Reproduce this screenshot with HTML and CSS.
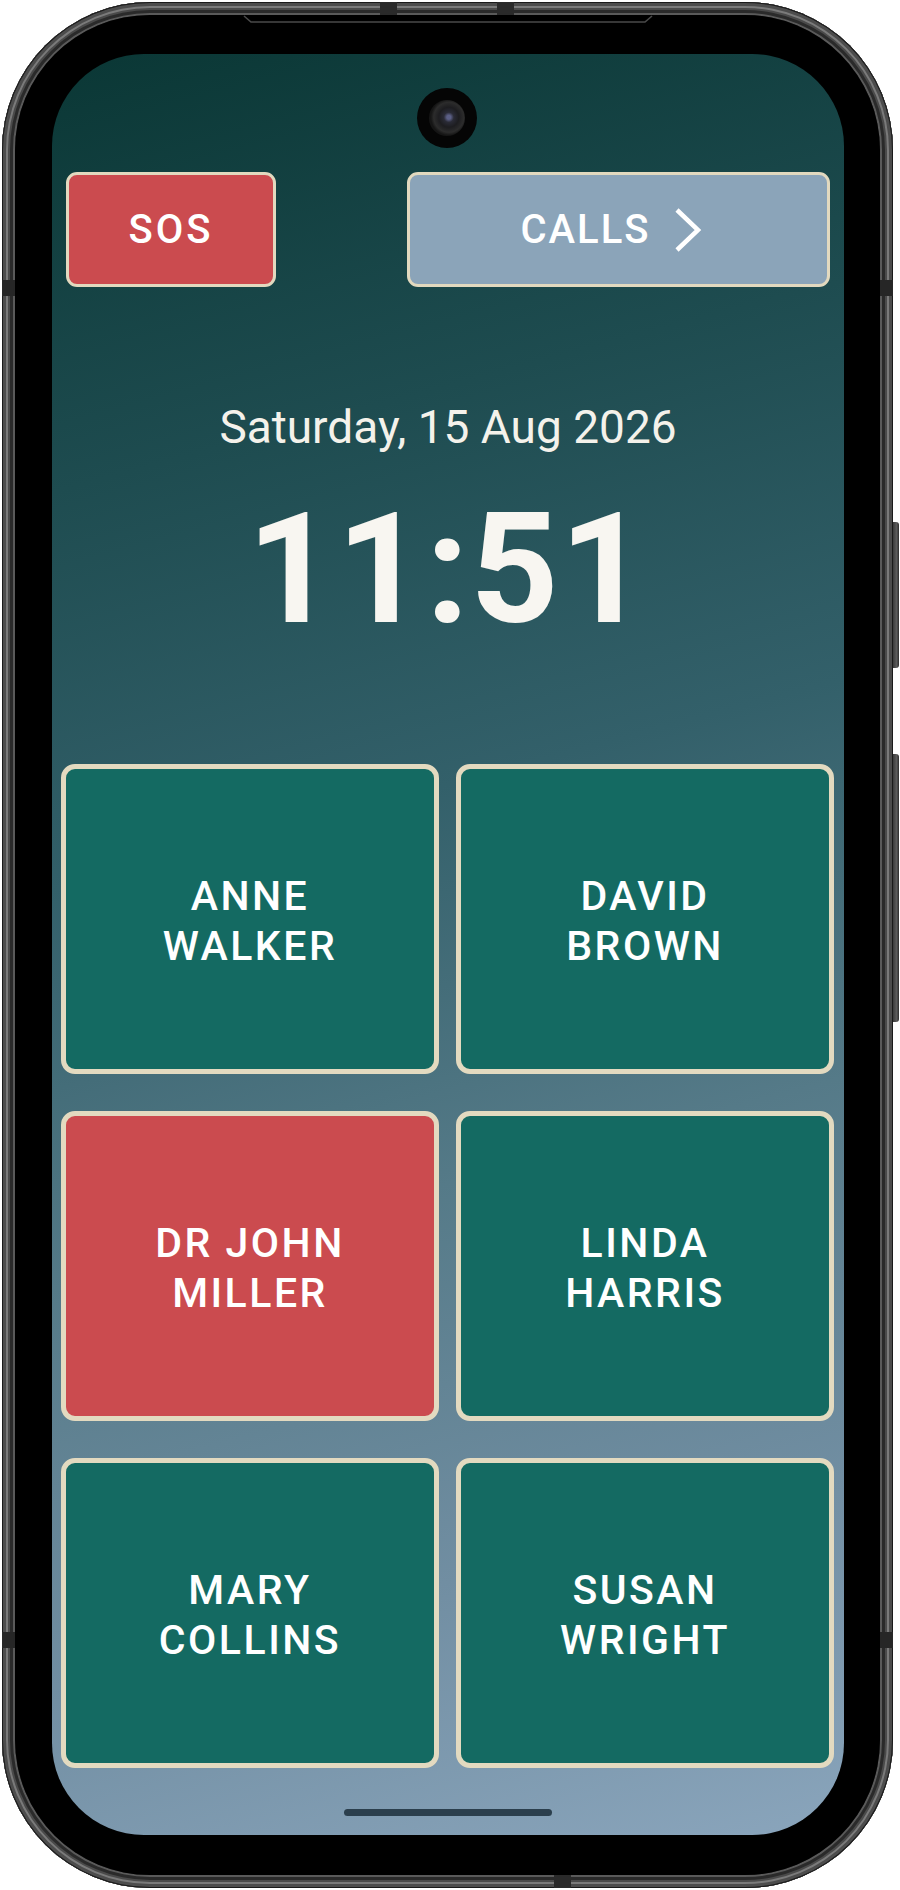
FILE: index.html
```html
<!DOCTYPE html>
<html lang="en">
<head>
<meta charset="utf-8">
<title>Home</title>
<link rel="stylesheet" href="styles.css">
</head>
<body>
<div class="phone">
  <span class="band band-top1"></span>
  <span class="band band-top2"></span>
  <span class="band band-bot"></span>
  <span class="band-side band-left1"></span>
  <span class="band-side band-left2"></span>
  <span class="band-side band-right1"></span>
  <span class="band-side band-right2"></span>
  <span class="side-btn side-btn-1"></span>
  <span class="side-btn side-btn-2"></span>
  <div class="bezel">
    <svg class="earpiece" width="410" height="10" viewBox="0 0 410 10">
      <path d="M1 1 L8 7 L402 7 L409 1" fill="none" stroke="#4a4a4a" stroke-width="1.6"/>
    </svg>
    <div class="screen">
      <div class="camera"><div class="lens"></div></div>
      <div class="top-row">
        <div class="btn btn-sos">SOS</div>
        <div class="btn btn-calls">
          <span>CALLS</span>
          <svg class="chevron" width="30" height="46" viewBox="0 0 30 46">
            <path d="M4 3 L25 23 L4 43" fill="none" stroke="#ffffff" stroke-width="4.5"/>
          </svg>
        </div>
      </div>
      <div class="date">Saturday, 15 Aug 2026</div>
      <div class="time">11:51</div>
      <div class="grid">
        <div class="tile">ANNE<br>WALKER</div>
        <div class="tile">DAVID<br>BROWN</div>
        <div class="tile tile-red">DR JOHN<br>MILLER</div>
        <div class="tile">LINDA<br>HARRIS</div>
        <div class="tile">MARY<br>COLLINS</div>
        <div class="tile">SUSAN<br>WRIGHT</div>
      </div>
      <div class="home-bar"></div>
    </div>
  </div>
</div>
</body>
</html>
```

FILE: styles.css
```css
html, body {
  margin: 0;
  padding: 0;
  background: #ffffff;
}

body {
  width: 900px;
  height: 1890px;
  overflow: hidden;
  font-family: Roboto, "Liberation Sans", sans-serif;
}

.phone {
  position: relative;
  box-sizing: border-box;
  margin: 2px 0 0 2px;
  width: 891px;
  height: 1886px;
  padding: 13px;
  border-radius: 148px;
  background: linear-gradient(90deg, #2e2e2e, #3d3d3d 50%, #2e2e2e);
  box-shadow:
    inset 0 0 0 1px #1a1a1a,
    inset 0 0 0 4px #4c4c4c,
    inset 0 0 0 6px #7a7a7a,
    inset 0 0 0 8px #4a4a4a,
    inset 0 0 0 11px #2a2a2a,
    inset 0 0 0 13px #5a5a5a;
}

.band {
  position: absolute;
  top: 0;
  width: 17px;
  height: 13px;
  background: #2a2a2a;
}
.band-top1 { left: 378px; }
.band-top2 { left: 495px; }
.band-bot { top: auto; bottom: 0; left: 552px; }

.band-side {
  position: absolute;
  width: 13px;
  height: 16px;
  background: #262626;
}
.band-left1 { left: 0; top: 278px; }
.band-left2 { left: 0; top: 1630px; }
.band-right1 { right: 0; top: 278px; }
.band-right2 { right: 0; top: 1630px; }

.side-btn {
  position: absolute;
  right: -6px;
  width: 6px;
  border-radius: 0 3px 3px 0;
  background: linear-gradient(90deg, #3a3a3a, #5c5c5c 60%, #2c2c2c);
}
.side-btn-1 { top: 520px; height: 146px; }
.side-btn-2 { top: 752px; height: 268px; }

.bezel {
  position: relative;
  box-sizing: border-box;
  height: 100%;
  padding: 39px 36px 40px 37px;
  border-radius: 135px;
  background: #000000;
}

.earpiece {
  position: absolute;
  left: 228px;
  top: 0;
}

.screen {
  position: relative;
  box-sizing: border-box;
  width: 792px;
  height: 1781px;
  border-radius: 92px;
  overflow: hidden;
  display: flex;
  flex-direction: column;
  background: linear-gradient(165deg, #0a3735 0%, #1e4c50 22%, #33606a 42%, #557a88 62%, #718ea2 82%, #8aa5bc 100%);
}

.camera {
  position: absolute;
  left: 365px;
  top: 34px;
  width: 60px;
  height: 60px;
  border-radius: 50%;
  background: #050505;
  display: flex;
  align-items: center;
  justify-content: center;
}
.lens {
  width: 36px;
  height: 36px;
  border-radius: 50%;
  background: radial-gradient(circle at 55% 48%, #5b5f86 0 2px, #2a2b36 5px, #1d1d20 10px, #2c2c2c 15px, #151515 18px);
}

.top-row {
  margin-top: 118px;
  padding: 0 14px;
  height: 115px;
  display: flex;
  justify-content: space-between;
}

.btn {
  box-sizing: border-box;
  height: 115px;
  border: 3px solid #e2d9bf;
  border-radius: 11px;
  display: flex;
  align-items: center;
  justify-content: center;
  color: #ffffff;
  font-size: 40px;
  font-weight: 500;
  letter-spacing: 2px;
}

.btn-sos {
  width: 210px;
  background: #cb4b4f;
  letter-spacing: 3px;
}

.btn-calls {
  width: 423px;
  padding-right: 14px;
  background: #8ba4b9;
  gap: 22px;
}

.chevron {
  display: block;
}

.date {
  margin-top: 113px;
  text-align: center;
  color: #f4f2eb;
  font-size: 46px;
  line-height: 54px;
  font-weight: 400;
}

.time {
  margin-top: 39px;
  text-align: center;
  color: #f8f6f1;
  font-size: 154px;
  line-height: 154px;
  font-weight: 700;
  letter-spacing: 1px;
}

.grid {
  margin-top: 117px;
  padding: 0 10px 0 9px;
  display: grid;
  grid-template-columns: 378px 378px;
  grid-auto-rows: 310px;
  column-gap: 17px;
  row-gap: 37px;
}

.tile {
  box-sizing: border-box;
  border: 5px solid #e3dac0;
  border-radius: 14px;
  background: #146a62;
  display: flex;
  align-items: center;
  justify-content: center;
  text-align: center;
  color: #ffffff;
  font-size: 41px;
  line-height: 50px;
  font-weight: 500;
  letter-spacing: 2.5px;
  padding-top: 4px;
}

.tile-red {
  background: #cb4b4f;
}

.home-bar {
  margin: 41px auto 0;
  width: 208px;
  height: 7px;
  border-radius: 4px;
  background: #2b3f4d;
}
```
